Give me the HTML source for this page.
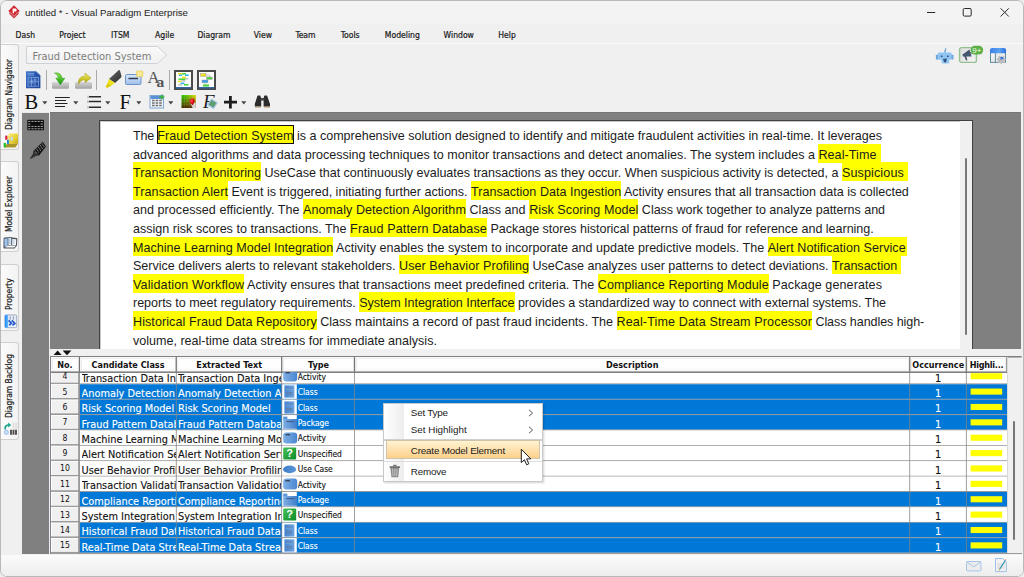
<!DOCTYPE html>
<html lang="en"><head><meta charset="utf-8"><title>untitled * - Visual Paradigm Enterprise</title>
<style>
*{box-sizing:border-box;margin:0;padding:0}
html,body{width:1024px;height:577px;overflow:hidden;background:#ececec}
body{position:relative;font-family:'Liberation Sans',sans-serif;color:#111}
.abs,#win div,#win span.p,#win svg{position:absolute}
#win{position:absolute;left:0;top:0;width:1024px;height:577px;background:#f0f0f0;border:1px solid #b9b9b9;border-radius:7px;overflow:hidden}
#in{left:-1px;top:-1px;width:1024px;height:577px}
.t{white-space:nowrap;line-height:1}
.menu{font:8.55px 'DejaVu Sans Condensed','Liberation Sans',sans-serif;color:#1a1a1a;-webkit-text-stroke:.2px #1a1a1a;top:30px;height:10px;line-height:10px;white-space:nowrap}
.vt{font:8.3px 'DejaVu Sans Condensed','Liberation Sans',sans-serif;color:#1a1a1a;-webkit-text-stroke:.2px #1a1a1a;white-space:nowrap;transform-origin:0 0;transform:rotate(-90deg);height:10px;line-height:10px}
.tab{left:1px;width:18px;border:1px solid #cfcfcf;border-left:none;border-radius:0 3px 3px 0;background:linear-gradient(90deg,#fbfbfb,#f3f3f3)}
.ln{left:133px;height:18px;font:12.55px/18px 'Liberation Sans',sans-serif;white-space:nowrap;color:#1c1c1c}
.ln span{padding:3.5px 0 1.9px 0}
.ln .h{background:#ffff00}
.ln .e{padding-right:4.3px}
.ln .f{padding-right:1.2px}
.ln .s{box-shadow:inset 0 0 0 1px #111}
.hd{top:357.5px;height:14px;border:1px solid #ededed;border-radius:1.5px;background:linear-gradient(#fefefe 70%,#f6f6f6);font:bold 9px 'DejaVu Sans Condensed','Liberation Sans',sans-serif;text-align:center;line-height:13px;color:#111;white-space:nowrap;overflow:hidden}
.row{left:80px;width:927px;background:#fff}
.row.sel{background:#0078d7;color:#fff}
.rn{left:51px;width:28px;border:1px solid #fdfdfd;border-bottom-color:#8c8c8c;border-right-color:#9a9a9a;background:#f0f0f0;font:8.6px 'DejaVu Sans Condensed','Liberation Sans',sans-serif;text-align:center;color:#111}
.c{height:15px;overflow:hidden;white-space:nowrap;font:10.88px/15px 'DejaVu Sans Condensed','Liberation Sans',sans-serif;-webkit-text-stroke:.12px}
.rnt{left:0;width:28px;height:15px;text-align:center;font:8.6px/15px 'DejaVu Sans Condensed','Liberation Sans',sans-serif;color:#111}
.ty{font:8.42px/15px 'DejaVu Sans Condensed','Liberation Sans',sans-serif}
.gl{background:#8a8a8a}
.mi{left:27px;font:9.85px 'Liberation Sans',sans-serif;color:#1a1a1a;white-space:nowrap;height:12px;line-height:12px}
</style></head>
<body><div id="win"><div id="in">
<div style="left:0;top:0;width:1024px;height:24px;background:#f3f3f3"></div>
<div style="left:0;top:24px;width:1024px;height:19px;background:#f0f0f0"></div>
<div style="left:0;top:43px;width:1024px;height:1px;background:#fbfbfb"></div>
<svg style="left:8px;top:5px" width="12" height="14" viewBox="0 0 12 14">
<path d="M6 0.3 L11.7 6 L6 11.7 L0.3 6 Z" fill="#d0272e"/>
<path d="M1 8.4 L6 13.6 L11 8.4 L10.2 7.6 L6 11.8 L1.8 7.6Z" fill="#c4252c" opacity=".9"/><path d="M2.2 7.2 L6 11 L9.8 7.2" stroke="#f3f3f3" stroke-width=".5" fill="none" opacity=".7"/>
<path d="M4.6 3.6 h2.6 a1.5 1.5 0 0 1 0 3 h-1.2 v1.6 h-1.4z" fill="#fff"/>
</svg>
<div class="t" style="left:25px;top:7px;font:9.66px 'Liberation Sans',sans-serif;height:12px;line-height:12px;color:#1b1b1b">untitled * - Visual Paradigm Enterprise</div>
<svg style="left:920px;top:4px" width="100" height="18" viewBox="0 0 100 18" fill="none" stroke="#2a2a2a" stroke-width="1">
<path d="M7 8.5 H15.2"/>
<rect x="43.2" y="4.5" width="8" height="7.6" rx="1.2"/>
<path d="M80.6 4.3 L88.8 12.5 M88.8 4.3 L80.6 12.5"/>
</svg>
<div class="menu" style="left:15.6px">Dash</div>
<div class="menu" style="left:59.3px">Project</div>
<div class="menu" style="left:111px">ITSM</div>
<div class="menu" style="left:155px">Agile</div>
<div class="menu" style="left:197.4px">Diagram</div>
<div class="menu" style="left:253.8px">View</div>
<div class="menu" style="left:295.4px">Team</div>
<div class="menu" style="left:340.8px">Tools</div>
<div class="menu" style="left:384.8px">Modeling</div>
<div class="menu" style="left:443.6px">Window</div>
<div class="menu" style="left:498.3px">Help</div>
<svg style="left:25px;top:45px" width="145" height="20" viewBox="0 0 145 20">
<defs><linearGradient id="bcg" x1="0" y1="0" x2="0" y2="1"><stop offset="0" stop-color="#fafafa"/><stop offset="1" stop-color="#f1f1f1"/></linearGradient></defs>
<path d="M1.5 1.5 H132.5 L141.5 10 L132.5 18.5 H1.5 Z" fill="url(#bcg)" stroke="#cdd1d8" stroke-width="1"/></svg>
<div class="t" style="left:32.5px;top:49.6px;font:11px 'DejaVu Sans Condensed','Liberation Sans',sans-serif;height:14px;line-height:14px;color:#7d7d7d">Fraud Detection System</div>
<svg style="left:935px;top:47px" width="20" height="18" viewBox="0 0 20 18">
<path d="M9.2 5.8 L9.6 3 L10.6 1.1 L11.4 1.3 L11 3.4 L10.9 5.8Z" fill="#6aa6dc"/>
<rect x="2.8" y="5.4" width="13.8" height="7.4" rx="1.3" fill="#8ec5f2"/>
<rect x=".9" y="7.8" width="2.2" height="4.8" rx=".5" fill="#6fa8dc"/>
<rect x="16.3" y="7.8" width="2.2" height="4.8" rx=".5" fill="#6fa8dc"/>
<path d="M6.6 12.4 H14.2 V15.2 Q14.2 16.6 12.8 16.6 H8 Q6.6 16.6 6.6 15.2Z" fill="#8ec5f2"/>
<rect x="5.8" y="8.4" width="1.7" height="1.7" rx=".5" fill="#2f4f78"/><rect x="12" y="8.4" width="1.7" height="1.7" rx=".5" fill="#2f4f78"/>
<path d="M7.8 11.9 L11.9 11.6 L11 15.4 L9.4 15.2Z" fill="#34527c"/>
</svg>
<svg style="left:958px;top:45px" width="27" height="20" viewBox="0 0 27 20">
<defs><linearGradient id="mg" x1="0" y1="0" x2="1" y2="1"><stop offset="0" stop-color="#dcdcdc"/><stop offset="1" stop-color="#f6f6f6"/></linearGradient></defs>
<rect x="1.6" y="2.6" width="16.8" height="14.8" rx="2" fill="url(#mg)" stroke="#93c190" stroke-width="1.4"/>
<path d="M4.4 9.6 L6 8.4 L11.4 4.6 L13.6 11.6 L8.4 11.4 L9.4 15.2 L8 15.6 L6.4 11.6 L5 11.6Z" fill="#46566f"/><path d="M12 7.4 q1.6 .2 1.2 2" stroke="#46566f" stroke-width=".8" fill="none"/>
<rect x="12.6" y="0.8" width="12.6" height="8.6" rx="4.3" fill="#5caf45"/>
<text x="18.9" y="7.6" font-family="Liberation Sans,sans-serif" font-size="8" fill="#f4ffe8" text-anchor="middle">9+</text>
</svg>
<svg style="left:989px;top:47px" width="19" height="19" viewBox="0 0 19 19">
<defs><linearGradient id="wg" x1="0" y1="0" x2="1" y2="0"><stop offset="0" stop-color="#3f7fe8"/><stop offset=".6" stop-color="#5aa2f2"/><stop offset="1" stop-color="#2f6fe0"/></linearGradient>
<linearGradient id="wp" x1="0" y1="0" x2="0" y2="1"><stop offset="0" stop-color="#ffffff"/><stop offset="1" stop-color="#e6e6e6"/></linearGradient></defs>
<rect x="1.5" y="3" width="15" height="12.3" fill="url(#wp)" stroke="#3a7088" stroke-width=".8"/>
<rect x="7" y="6" width="9" height="8.8" fill="#e9e9e9"/>
<path d="M1 3.2 Q1 1 3.2 1 H14.8 Q17 1 17 3.2 V6.2 H1Z" fill="url(#wg)"/>
<path d="M6.4 6.2 V15.3" stroke="#3a7088" stroke-width=".8"/>
<path d="M12.6 9.4 l1 .3 l.9 -.8 l.9 .7 l-.4 1.1 l.7 .9 l1.1 .1 l.1 1.2 l-1.1 .4 l-.3 1.1 l.6 1 l-.9 .8 l-1 -.6 l-1 .5 l-.3 1.1 h-1.2 l-.3 -1.1 l-1.1 -.5 l-1 .6 l-.8 -.9 l.6 -1 l-.4 -1 l-1.1 -.4 l.1 -1.2 l1.2 -.2 l.6 -.9 l-.4 -1.1 l1 -.7 l.9 .8z" fill="#bdbdbd"/>
<path d="M11.4 10 q2.6 -.8 3.4 1.6 l-1.4 .4 l-2.4 1 q1.2 -1.2 .4 -3z" fill="#2f70e2"/>
</svg>
<svg style="left:25px;top:70px" width="17" height="19" viewBox="0 0 17 19">
<defs><linearGradient id="dg" x1="0" y1="0" x2="1" y2="1"><stop offset="0" stop-color="#3f74cc"/><stop offset="1" stop-color="#1b4294"/></linearGradient></defs>
<path d="M1 1.2 H10.6 L15.4 5.6 V18.2 H1Z" fill="url(#dg)"/>
<path d="M10.6 1.2 V5.6 H15.4Z" fill="#2451a6"/><path d="M10.6 1.2 L15.4 5.6" stroke="#6f98dc" stroke-width=".7"/>
<path d="M2.4 3.4 H9 M2.4 5 H9" stroke="#86a9e4" stroke-width=".9" opacity=".85"/>
<rect x="3" y="7.6" width="10.6" height="8.6" fill="none" stroke="#8fb0e8" stroke-width=".8" opacity=".8"/>
<path d="M3 11.8 H13.6 M6.5 7.6 V16.2 M10 7.6 V16.2 M4.6 9.4 l4.4 4.6 m-4.4 0 l4.4 -4.6 M9 10 h3" stroke="#a4c0f0" stroke-width=".7" fill="none" opacity=".8"/>
</svg>
<div style="left:46px;top:70px;width:1px;height:20px;background:#a9a9a9"></div>
<svg style="left:51px;top:71px" width="19" height="19" viewBox="0 0 19 19">
<defs><linearGradient id="tr" x1="0" y1="0" x2="0" y2="1"><stop offset="0" stop-color="#d6d6d6"/><stop offset="1" stop-color="#a2a2a2"/></linearGradient>
<linearGradient id="ga" x1="0" y1="0" x2="0" y2="1"><stop offset="0" stop-color="#8fe04e"/><stop offset=".5" stop-color="#4cc028"/><stop offset="1" stop-color="#1c8f12"/></linearGradient></defs>
<rect x="1" y="11" width="17" height="6.8" rx="1.2" fill="url(#tr)"/>
<path d="M3.4 2 q6.6 -1 7.6 5.2 h2.8 l-4.4 6.6 l-4.6 -6.6 h2.6 q-.2 -3.6 -4 -5.2z" fill="url(#ga)" stroke="#2b9a22" stroke-width=".5"/>
</svg>
<svg style="left:74px;top:71px" width="19" height="19" viewBox="0 0 19 19">
<defs><linearGradient id="ya" x1="0" y1="0" x2="0" y2="1"><stop offset="0" stop-color="#ecea78"/><stop offset=".5" stop-color="#cfc82a"/><stop offset="1" stop-color="#9c940e"/></linearGradient></defs>
<rect x="1" y="11" width="17" height="6.8" rx="1.2" fill="url(#tr)"/>
<path d="M4.4 13.4 q-1 -7.8 6.6 -8.4 v-3 l6 5 l-6 4.8 v-3 q-4.6 .2 -6.6 4.6z" fill="url(#ya)" stroke="#a8a01a" stroke-width=".5"/>
</svg>
<div style="left:96px;top:70px;width:1px;height:20px;background:#a9a9a9"></div>
<svg style="left:104px;top:69px" width="19" height="20" viewBox="0 0 19 20">
<defs><linearGradient id="hb" x1="0" y1="0" x2="1" y2="1"><stop offset="0" stop-color="#6e6e6e"/><stop offset=".5" stop-color="#4a4a4a"/><stop offset="1" stop-color="#2c2c2c"/></linearGradient></defs>
<path d="M14.6 1.2 Q15.6 .6 16 1.8 L17.4 6.8 Q17.6 7.8 17 8.4 L11 13.9 L5 10Z" fill="url(#hb)"/>
<path d="M5 10 L11 13.9 L7.6 16.2 L3.6 18.8 L1.7 17.9 L3.3 14.4Z" fill="#efe11e"/>
<path d="M3.3 14.4 L7.6 16.2 L3.6 18.8 L1.7 17.9Z" fill="#d9cb14"/>
</svg>
<svg style="left:124px;top:70px" width="21" height="17" viewBox="0 0 21 17">
<defs><linearGradient id="tb" x1="0" y1="0" x2="0" y2="1"><stop offset="0" stop-color="#dbe8f8"/><stop offset="1" stop-color="#9dbfe8"/></linearGradient></defs>
<rect x="1.5" y="4.5" width="15.5" height="10" rx="1.2" fill="url(#tb)" stroke="#6d97cc" stroke-width="1"/>
<path d="M4.5 8.5 H14" stroke="#2b3a55" stroke-width="1.4"/>
<rect x="12.4" y="1" width="6.4" height="5.6" rx="1" fill="#f7e27a" stroke="#e6c84a" stroke-width=".6"/>
<path d="M14.4 1.6 V6 M16.6 1.6 V6" stroke="#fff8c8" stroke-width=".8"/>
</svg>
<div class="t" style="left:147.6px;top:67.6px;font:16.8px 'Liberation Serif',serif;color:#555;height:20px;line-height:20px">A</div>
<div class="t" style="left:156.4px;top:72.6px;font:bold 15.5px 'Liberation Serif',serif;color:#555;height:18px;line-height:18px">a</div>
<div style="left:169px;top:70px;width:1px;height:20px;background:#a9a9a9"></div>
<svg style="left:174px;top:70px" width="19" height="20" viewBox="0 0 19 20">
<rect x="1" y="1" width="17" height="18" fill="#fff" stroke="#4a4a4a" stroke-width="2"/>
<path d="M2 17.8 H17" stroke="#3465a4" stroke-width="1.4"/>
<rect x="4" y="3" width="4" height="1.6" fill="#f2e020"/><rect x="8" y="3" width="4" height="1.6" fill="#4cd63c"/><rect x="5" y="4.6" width="3" height="1.4" fill="#28b4ee"/><rect x="11" y="4.4" width="3.6" height="1.6" fill="#28b4ee"/>
<rect x="8" y="6.6" width="4" height="1.6" fill="#f2e020"/><rect x="4.5" y="8.4" width="7" height="1.6" fill="#4cd63c"/><rect x="11.5" y="8" width="3" height="1.4" fill="#bbb"/>
<rect x="4" y="10.6" width="3.4" height="1.6" fill="#f2e020"/><rect x="7.4" y="10.2" width="4" height="1.4" fill="#bbb"/>
<rect x="6.5" y="12.6" width="4" height="1.6" fill="#28b4ee"/><rect x="10" y="14" width="4.4" height="1.6" fill="#4cd63c"/><rect x="4" y="14.4" width="4" height="1.2" fill="#bbb"/>
</svg>
<svg style="left:197px;top:70px" width="19" height="20" viewBox="0 0 19 20">
<rect x="1" y="1" width="17" height="18" fill="#fff" stroke="#4a4a4a" stroke-width="2"/>
<path d="M2 17.8 H17" stroke="#3465a4" stroke-width="1.4"/>
<rect x="3.6" y="3.6" width="5.4" height="2.8" fill="#f2e020" stroke="#999" stroke-width=".5"/>
<rect x="9.6" y="7" width="5.6" height="2.4" fill="#4cd63c" stroke="#999" stroke-width=".5"/>
<rect x="5" y="10" width="6" height="2.8" fill="#3aa0ee" stroke="#999" stroke-width=".5"/>
<rect x="6" y="14.4" width="6" height="2.2" fill="#4cd63c"/>
<path d="M9 5 H12.4 V7 M8 12.8 V14.4" stroke="#999" stroke-width=".6" fill="none"/>
</svg>
<div class="t" style="left:24.5px;top:90.5px;font:20.5px 'Liberation Serif',serif;color:#111;height:22px;line-height:22px">B</div>
<svg style="left:41.5px;top:101.0px" width="6" height="4" viewBox="0 0 6 4"><path d="M0.3 0.2 H5.3 L2.8 3.6Z" fill="#444"/></svg>
<svg style="left:54px;top:95px" width="18" height="14" viewBox="0 0 18 14"><path d="M1 2.5 H15.8 M1 5.5 H12 M1 8.5 H13.5 M1 11.5 H11" stroke="#222" stroke-width="1.1"/></svg>
<svg style="left:73px;top:101.0px" width="6" height="4" viewBox="0 0 6 4"><path d="M0.3 0.2 H5.3 L2.8 3.6Z" fill="#444"/></svg>
<svg style="left:86px;top:95px" width="18" height="14" viewBox="0 0 18 14"><path d="M3 1.85 H15 M3 6.6 H15 M3 12.25 H15" stroke="#2c2c2c" stroke-width="1.5"/><path d="M2 .6 V3.2 M1.4 5.4 l1 .5 l-1 1.6 h1.2 M2 10.8 V13.6" stroke="#8a8a8a" stroke-width=".7" fill="none"/></svg>
<svg style="left:104.6px;top:101.0px" width="6" height="4" viewBox="0 0 6 4"><path d="M0.3 0.2 H5.3 L2.8 3.6Z" fill="#444"/></svg>
<div class="t" style="left:119.5px;top:90.5px;font:20.5px 'Liberation Serif',serif;color:#111;height:22px;line-height:22px">F</div>
<svg style="left:135.6px;top:101.0px" width="6" height="4" viewBox="0 0 6 4"><path d="M0.3 0.2 H5.3 L2.8 3.6Z" fill="#444"/></svg>
<svg style="left:149px;top:94px" width="17" height="16" viewBox="0 0 17 16">
<rect x="1" y="1.5" width="13.5" height="12.5" fill="#f4f8fc" stroke="#7fa6cf" stroke-width="1"/>
<rect x="1.5" y="2" width="12.5" height="3" fill="#5b8fd6"/>
<path d="M3 6.6 H5.6 M6.6 6.6 H9.2 M10.2 6.6 H12.8 M3 9 H5.6 M6.6 9 H9.2 M10.2 9 H12.8 M3 11.4 H5.6 M6.6 11.4 H9.2 M10.2 11.4 H12.8" stroke="#6b6b6b" stroke-width="1.5"/>
<path d="M10.2 3 H15.4 M12.8 0.6 V5.6" stroke="#3cb43c" stroke-width="1.5"/>
</svg>
<svg style="left:168px;top:101.0px" width="6" height="4" viewBox="0 0 6 4"><path d="M0.3 0.2 H5.3 L2.8 3.6Z" fill="#444"/></svg>
<svg style="left:181px;top:94px" width="16" height="15" viewBox="0 0 16 15">
<defs><linearGradient id="cg" x1="0" y1="0" x2="1" y2="0"><stop offset="0" stop-color="#1fc808"/><stop offset=".55" stop-color="#7fd000"/><stop offset="1" stop-color="#e6e010"/></linearGradient>
<linearGradient id="cg2" x1="0" y1="0" x2="0" y2="1"><stop offset="0" stop-color="#5a1a00" stop-opacity="0"/><stop offset=".55" stop-color="#5a2a00" stop-opacity=".55"/><stop offset="1" stop-color="#4a1400" stop-opacity=".92"/></linearGradient>
<radialGradient id="rb" cx=".4" cy=".35" r=".7"><stop offset="0" stop-color="#ff5a5a"/><stop offset=".6" stop-color="#e00010"/><stop offset="1" stop-color="#900008"/></radialGradient></defs>
<rect x=".6" y="1" width="14.2" height="13" fill="url(#cg)"/>
<rect x=".6" y="1" width="14.2" height="13" fill="url(#cg2)"/>
<path d="M3.4 1 V14 M6.2 1 V14 M9 1 V14 M11.8 1 V14 M.6 4.2 H14.8 M.6 7.4 H14.8 M.6 10.6 H14.8" stroke="#fff" stroke-opacity=".16" stroke-width=".6"/>
<path d="M9.6 9.6 L11.6 14 H14.8 V8.6Z" fill="#d4d4d4"/>
<path d="M8.6 7.2 a2.5 2.5 0 1 1 4.9 .4 q-.6 2.2 -2 3.6 q-2.4 -1.6 -2.9 -4z" fill="url(#rb)"/>
</svg>
<div class="t" style="left:203px;top:92px;font:italic 19px 'Liberation Serif',serif;color:#222;height:20px;line-height:20px">F</div>
<svg style="left:207px;top:98px" width="12" height="12" viewBox="0 0 12 12"><path d="M4.4 1.2 L10.2 4.8 L6.6 10.4 L0.8 6.8Z" fill="#5e9c72" stroke="#a9c8ea" stroke-width="1.2"/></svg>
<svg style="left:223px;top:95px" width="15" height="14" viewBox="0 0 15 14"><path d="M1 7.2 H14 M7.4 1 V13.4" stroke="#1e1e1e" stroke-width="2.8"/></svg>
<svg style="left:241px;top:101.0px" width="6" height="4" viewBox="0 0 6 4"><path d="M0.3 0.2 H5.3 L2.8 3.6Z" fill="#444"/></svg>
<svg style="left:254px;top:95px" width="17" height="13" viewBox="0 0 17 13">
<path d="M3.2 1.6 q0 -1 1 -1 h1.4 q1 0 1 1 l.6 2 v8 h-6.4 v-2.6z M10 1.6 q0 -1 1 -1 h1.4 q1 0 1 1 l2.6 7.4 v2.6 h-6.4 v-8z" fill="#2b2b2b"/>
<rect x="6.6" y="3" width="3.8" height="2.6" fill="#444"/>
<path d="M1 12.2 H6.8 M10.2 12.2 H16" stroke="#b88a5a" stroke-width=".8"/>
</svg>
<div class="tab" style="top:44px;height:106px"></div>
<div class="vt" style="left:3.6px;top:129.8px">Diagram Navigator</div>
<div class="tab" style="top:161px;height:91px"></div>
<div class="vt" style="left:3.6px;top:232.4px">Model Explorer</div>
<div class="tab" style="top:264px;height:67px"></div>
<div class="vt" style="left:3.6px;top:310.4px">Property</div>
<div class="tab" style="top:342px;height:98px"></div>
<div class="vt" style="left:3.6px;top:418.4px">Diagram Backlog</div>
<svg style="left:3px;top:133px" width="16" height="16" viewBox="0 0 16 16">
<defs><linearGradient id="yb" x1="0" y1="0" x2="1" y2="1"><stop offset="0" stop-color="#f7ec7a"/><stop offset=".6" stop-color="#e6cf2e"/><stop offset="1" stop-color="#bfa51c"/></linearGradient></defs>
<path d="M0.8 14.6 L4.4 10.6 H15 L12.4 14.6Z" fill="#a8952a"/>
<rect x="5.6" y=".4" width="9.4" height="10.4" rx=".8" fill="url(#yb)"/>
<rect x="7.7" y="3.9" width="2.1" height="3.9" fill="#a9c4ee"/><rect x="8.2" y="4.6" width="1.1" height="2.2" fill="#eef4ff"/>
<rect x="2.2" y="2.6" width="2.1" height="4.2" fill="#d81f4a"/><rect x="4.3" y="3.2" width="1" height="3" fill="#f0a020"/>
<rect x="4" y="6.8" width="1.9" height="4.4" fill="#1f86d8"/>
<rect x=".6" y="9.9" width="2.4" height="4.5" fill="#2fc22f"/>
</svg>
<svg style="left:2px;top:236px" width="17" height="14" viewBox="0 0 17 14">
<path d="M1.6 2.6 Q1.4 1.6 2.6 1.5 L9 1 Q10 .9 10.2 1.6 L14.6 1.9 Q15.4 2 15.3 2.9 L15 9.6 L12.6 12.4 L2.2 12.6 Q1.4 12.6 1.4 11.6Z" fill="#4d535c"/>
<path d="M2.3 2.8 L5.6 2.2 V9.6 L2.6 11.2Z" fill="#9cc4ee"/>
<path d="M6.4 2 L9.2 1.8 V9 H6.4Z" fill="#e8f0fa"/><path d="M7.2 2.6 h1.2 v5.6 h-1.2z" fill="#a9c9ee"/>
<path d="M10.2 3 L14.2 3.2 L14 9 H10.2Z" fill="#f4f6f8"/><path d="M10.8 3.8 h1.6 v4.2 h-1.6z" fill="#c4d8f0"/>
<path d="M5.8 9.6 H14 L12.2 11.6 H3Z" fill="#fafafa"/>
</svg>
<svg style="left:4px;top:314px" width="14" height="15" viewBox="0 0 14 15">
<defs><linearGradient id="pb" x1="0" y1="0" x2="1" y2="0"><stop offset="0" stop-color="#1a8cff"/><stop offset="1" stop-color="#6ab8ff"/></linearGradient></defs>
<rect x=".9" y=".9" width="11.8" height="12.8" rx="1.2" fill="#e4ebf6" stroke="#8e9bb4" stroke-width=".8"/>
<path d="M2.1 .9 H4.1 V13.7 H2.1 Q.9 13.7 .9 12.5 V2.1 Q.9 .9 2.1 .9Z" fill="url(#pb)"/>
<path d="M6.2 2.4 V5.6 M9.4 2.4 V5.6" stroke="#8a93a8" stroke-width="1"/>
<path d="M4.6 6.4 L7.4 9.2 L5.2 11.4 M7.8 6.4 L10.8 9.4 L8.4 11.6" fill="none" stroke="#2458c8" stroke-width="1.7"/>
<path d="M4.4 12.2 H12" stroke="#fff" stroke-width=".8"/>
</svg>
<svg style="left:3px;top:422px" width="16" height="15" viewBox="0 0 16 15">
<path d="M1.4 7.4 Q.6 2.4 5.2 2.2 V.6 L8.2 3 L5.2 5.4 V3.9 Q2.6 4 3 7.4Z" fill="#19a68a"/>
<circle cx="3.3" cy="10.2" r="2.5" fill="#a6c6f0"/><circle cx="3.3" cy="10.2" r="1.2" fill="#d4e4f8"/>
<path d="M8 7.8 V12.8 M10.5 7.8 V12.8 M13 7.8 V12.8" stroke="#4c4c4c" stroke-width="1.9"/>
<path d="M10.2 .6 V7 M12 .6 V7 M13.8 .6 V7" stroke="#d6d6d6" stroke-width=".9"/>
</svg>
<div style="left:22px;top:112px;width:999px;height:237px;background:#808080"></div>
<div style="left:22px;top:349px;width:28px;height:205px;background:#808080"></div>
<div style="left:50px;top:112px;width:971px;height:1px;background:#777"></div>
<div style="left:22px;top:112px;width:28px;height:1px;background:#e8e8e8"></div>
<div style="left:49px;top:112px;width:1px;height:442px;background:#ededed"></div>
<svg style="left:27px;top:119px" width="18" height="12" viewBox="0 0 18 12">
<rect x=".3" y=".7" width="16.6" height="10.6" rx=".9" fill="#0c0c0c"/><rect x="1.2" y="1.9" width="2.1" height="1.1" fill="#9a9a9a"/><rect x="4.4" y="1.9" width="2.1" height="1.1" fill="#9a9a9a"/><rect x="7.5" y="1.9" width="2.1" height="1.1" fill="#9a9a9a"/><rect x="10.6" y="1.9" width="2.1" height="1.1" fill="#9a9a9a"/><rect x="13.7" y="1.9" width="2.1" height="1.1" fill="#9a9a9a"/><rect x="1.2" y="4.5" width="2.1" height="1.1" fill="#9a9a9a"/><rect x="13.7" y="4.5" width="2.1" height="1.1" fill="#9a9a9a"/><rect x="1.2" y="6.9" width="2.1" height="1.1" fill="#9a9a9a"/><rect x="4.4" y="6.9" width="2.1" height="1.1" fill="#9a9a9a"/><rect x="7.5" y="6.9" width="2.1" height="1.1" fill="#9a9a9a"/><rect x="10.6" y="6.9" width="2.1" height="1.1" fill="#9a9a9a"/><rect x="13.7" y="6.9" width="2.1" height="1.1" fill="#9a9a9a"/><rect x="1.2" y="9.2" width="2.1" height="1.1" fill="#9a9a9a"/><rect x="4.4" y="9.2" width="2.1" height="1.1" fill="#9a9a9a"/><rect x="7.5" y="9.2" width="2.1" height="1.1" fill="#9a9a9a"/><rect x="10.6" y="9.2" width="2.1" height="1.1" fill="#9a9a9a"/><rect x="13.7" y="9.2" width="2.1" height="1.1" fill="#9a9a9a"/>
</svg>
<svg style="left:29px;top:140px" width="18" height="20" viewBox="0 0 18 20">
<path d="M13.7 1.7 L17 6.5 L10.1 15.6 L4.1 11.2Z" fill="#141414"/><circle cx="13.19" cy="3.94" r=".62" fill="#8d8d8d"/><circle cx="14.12" cy="5.32" r=".62" fill="#8d8d8d"/><circle cx="15.05" cy="6.70" r=".62" fill="#8d8d8d"/><circle cx="11.41" cy="5.70" r=".62" fill="#8d8d8d"/><circle cx="12.34" cy="7.08" r=".62" fill="#8d8d8d"/><circle cx="13.27" cy="8.46" r=".62" fill="#8d8d8d"/><circle cx="9.62" cy="7.47" r=".62" fill="#8d8d8d"/><circle cx="10.55" cy="8.85" r=".62" fill="#8d8d8d"/><circle cx="11.48" cy="10.23" r=".62" fill="#8d8d8d"/><circle cx="7.83" cy="9.24" r=".62" fill="#8d8d8d"/><circle cx="8.76" cy="10.62" r=".62" fill="#8d8d8d"/><circle cx="9.69" cy="12.00" r=".62" fill="#8d8d8d"/><circle cx="6.05" cy="11.00" r=".62" fill="#8d8d8d"/><circle cx="6.98" cy="12.38" r=".62" fill="#8d8d8d"/><circle cx="7.91" cy="13.76" r=".62" fill="#8d8d8d"/>
<path d="M4.1 11.2 L10.1 15.6 L6.8 15.9 L1.6 18.9 L1.1 18.3 L4.0 13.8Z" fill="#303030"/>
</svg>
<div style="left:99px;top:120px;width:874px;height:229px;background:#fff;border:1px solid #404040;border-bottom:none;box-shadow:inset 1px 1px 0 rgba(64,64,64,.28)"></div>
<div style="left:960px;top:121px;width:12px;height:228px;background:#f0f0f0"></div>
<div style="left:965px;top:158px;width:2px;height:177px;background:#7a7a7a;border-radius:1px"></div>
<div class="ln" id="l0" style="top:126.4px"><span id="s0_0" class="" style="letter-spacing:-0.2148px">The </span><span id="s0_1" class="h s" style="letter-spacing:0.0753px">Fraud Detection System</span><span id="s0_2" class="" style="letter-spacing:-0.0138px"> is a comprehensive solution designed to identify and mitigate fraudulent activities in real-time. It leverages</span></div>
<div class="ln" id="l1" style="top:145.0px"><span id="s1_0" class="" style="letter-spacing:0.0061px">advanced algorithms and data processing techniques to monitor transactions and detect anomalies. The system includes a </span><span id="s1_1" class="h e" style="letter-spacing:0.0882px">Real-Time</span></div>
<div class="ln" id="l2" style="top:163.6px"><span id="s2_0" class="h" style="letter-spacing:0.0384px">Transaction Monitoring</span><span id="s2_1" class="" style="letter-spacing:-0.027px"> UseCase that continuously evaluates transactions as they occur. When suspicious activity is detected, a </span><span id="s2_2" class="h e" style="letter-spacing:0.1313px">Suspicious</span></div>
<div class="ln" id="l3" style="top:182.2px"><span id="s3_0" class="h" style="letter-spacing:0.0772px">Transaction Alert</span><span id="s3_1" class="" style="letter-spacing:-0.023px"> Event is triggered, initiating further actions. </span><span id="s3_2" class="h" style="letter-spacing:0.0294px">Transaction Data Ingestion</span><span id="s3_3" class="" style="letter-spacing:-0.0328px"> Activity ensures that all transaction data is collected</span></div>
<div class="ln" id="l4" style="top:200.8px"><span id="s4_0" class="" style="letter-spacing:0.0416px">and processed efficiently. The </span><span id="s4_1" class="h" style="letter-spacing:0.0645px">Anomaly Detection Algorithm</span><span id="s4_2" class="" style="letter-spacing:0.044px"> Class and </span><span id="s4_3" class="h" style="letter-spacing:0.0642px">Risk Scoring Model</span><span id="s4_4" class="" style="letter-spacing:-0.0374px"> Class work together to analyze patterns and</span></div>
<div class="ln" id="l5" style="top:219.4px"><span id="s5_0" class="" style="letter-spacing:0.0111px">assign risk scores to transactions. The </span><span id="s5_1" class="h" style="letter-spacing:0.1354px">Fraud Pattern Database</span><span id="s5_2" class="" style="letter-spacing:-0.0241px"> Package stores historical patterns of fraud for reference and learning.</span></div>
<div class="ln" id="l6" style="top:238.0px"><span id="s6_0" class="h" style="letter-spacing:0.0033px">Machine Learning Model Integration</span><span id="s6_1" class="" style="letter-spacing:0.0104px"> Activity enables the system to incorporate and update predictive models. The </span><span id="s6_2" class="h f" style="letter-spacing:0.0505px">Alert Notification Service</span></div>
<div class="ln" id="l7" style="top:256.6px"><span id="s7_0" class="" style="letter-spacing:-0.0081px">Service delivers alerts to relevant stakeholders. </span><span id="s7_1" class="h" style="letter-spacing:0.0734px">User Behavior Profiling</span><span id="s7_2" class="" style="letter-spacing:-0.0066px"> UseCase analyzes user patterns to detect deviations. </span><span id="s7_3" class="h e" style="letter-spacing:0.0006px">Transaction</span></div>
<div class="ln" id="l8" style="top:275.2px"><span id="s8_0" class="h" style="letter-spacing:0.1168px">Validation Workflow</span><span id="s8_1" class="" style="letter-spacing:0.0021px"> Activity ensures that transactions meet predefined criteria. The </span><span id="s8_2" class="h" style="letter-spacing:0.0822px">Compliance Reporting Module</span><span id="s8_3" class="" style="letter-spacing:0.0911px"> Package generates</span></div>
<div class="ln" id="l9" style="top:293.8px"><span id="s9_0" class="" style="letter-spacing:-0.0279px">reports to meet regulatory requirements. </span><span id="s9_1" class="h" style="letter-spacing:-0.0579px">System Integration Interface</span><span id="s9_2" class="" style="letter-spacing:-0.0632px"> provides a standardized way to connect with external systems. The</span></div>
<div class="ln" id="l10" style="top:312.4px"><span id="s10_0" class="h" style="letter-spacing:0.0762px">Historical Fraud Data Repository</span><span id="s10_1" class="" style="letter-spacing:0.0017px"> Class maintains a record of past fraud incidents. The </span><span id="s10_2" class="h" style="letter-spacing:0.1361px">Real-Time Data Stream Processor</span><span id="s10_3" class="" style="letter-spacing:-0.0744px"> Class handles high-</span></div>
<div class="ln" id="l11" style="top:331.0px"><span id="s11_0" class="" style="letter-spacing:-0.0024px">volume, real-time data streams for immediate analysis.</span></div>
<div style="left:50px;top:349px;width:972px;height:8px;background:#f0f0f0"></div>
<svg style="left:53px;top:350px" width="20" height="6" viewBox="0 0 20 6"><path d="M0.6 5 L4.6 0.6 L8.6 5Z M9.6 0.6 H18.4 L14 5.2Z" fill="#111"/></svg>
<div style="left:50px;top:356px;width:972px;height:198px;background:#f0f0f0"></div>
<svg style="left:50px;top:355px" width="972" height="4" viewBox="50 355 972 4"><rect x="50" y="356.1" width="971.6" height="1.4" fill="#747474"/></svg>
<div style="left:50px;top:356px;width:1px;height:198px;background:#7f8590"></div>
<div style="left:51px;top:357px;width:956px;height:16px;background:#fafafa"></div>
<div class="hd" style="left:51.5px;width:27.0px">No.</div>
<div class="hd" style="left:80.5px;width:95.0px">Candidate Class</div>
<div class="hd" style="left:177px;width:104.5px">Extracted Text</div>
<div class="hd" style="left:283px;width:71px">Type</div>
<div class="hd" style="left:355.5px;width:553.5px">Description</div>
<div class="hd" style="left:910.5px;width:55.5px">Occurrence</div>
<div class="hd" style="left:967px;width:39px;letter-spacing:-0.25px">Highli...</div>
<svg style="left:51px;top:357px" width="956" height="197" viewBox="51 357 956 197"><defs><clipPath id="tc"><rect x="51" y="372.4" width="956" height="182"/></clipPath></defs><g clip-path="url(#tc)"><rect x="79.5" y="368.91" width="927.5" height="14.61" fill="#ffffff"/><rect x="282.1" y="368.91" width="14.7" height="14.61" fill="#fff"/><rect x="970.6" y="373.16" width="31.6" height="6.1" fill="#ffff00"/><rect x="51" y="368.91" width="28.5" height="14.61" fill="#f0f0f0"/><rect x="51" y="368.91" width="27.3" height="0.77" fill="#fff"/><rect x="51" y="368.91" width="0.77" height="13.84" fill="#fff"/><rect x="51" y="382.75" width="28" height="0.77" fill="#858585"/><rect x="78.3" y="368.91" width="0.77" height="14.61" fill="#858585"/><rect x="51" y="383.52" width="956" height="0.77" fill="#848484"/><rect x="79.5" y="384.29" width="927.5" height="14.61" fill="#0078d7"/><rect x="282.1" y="384.29" width="14.7" height="14.61" fill="#fff"/><rect x="970.6" y="388.54" width="31.6" height="6.1" fill="#ffff00"/><rect x="51" y="384.29" width="28.5" height="14.61" fill="#f0f0f0"/><rect x="51" y="384.29" width="27.3" height="0.77" fill="#fff"/><rect x="51" y="384.29" width="0.77" height="13.84" fill="#fff"/><rect x="51" y="398.13" width="28" height="0.77" fill="#858585"/><rect x="78.3" y="384.29" width="0.77" height="14.61" fill="#858585"/><rect x="51" y="398.90" width="956" height="0.77" fill="#848484"/><rect x="79.5" y="399.67" width="927.5" height="14.61" fill="#0078d7"/><rect x="282.1" y="399.67" width="14.7" height="14.61" fill="#fff"/><rect x="970.6" y="403.92" width="31.6" height="6.1" fill="#ffff00"/><rect x="51" y="399.67" width="28.5" height="14.61" fill="#f0f0f0"/><rect x="51" y="399.67" width="27.3" height="0.77" fill="#fff"/><rect x="51" y="399.67" width="0.77" height="13.84" fill="#fff"/><rect x="51" y="413.51" width="28" height="0.77" fill="#858585"/><rect x="78.3" y="399.67" width="0.77" height="14.61" fill="#858585"/><rect x="51" y="414.28" width="956" height="0.77" fill="#848484"/><rect x="79.5" y="415.05" width="927.5" height="14.61" fill="#0078d7"/><rect x="282.1" y="415.05" width="14.7" height="14.61" fill="#fff"/><rect x="970.6" y="419.30" width="31.6" height="6.1" fill="#ffff00"/><rect x="51" y="415.05" width="28.5" height="14.61" fill="#f0f0f0"/><rect x="51" y="415.05" width="27.3" height="0.77" fill="#fff"/><rect x="51" y="415.05" width="0.77" height="13.84" fill="#fff"/><rect x="51" y="428.89" width="28" height="0.77" fill="#858585"/><rect x="78.3" y="415.05" width="0.77" height="14.61" fill="#858585"/><rect x="51" y="429.66" width="956" height="0.77" fill="#848484"/><rect x="79.5" y="430.43" width="927.5" height="14.61" fill="#ffffff"/><rect x="282.1" y="430.43" width="14.7" height="14.61" fill="#fff"/><rect x="970.6" y="434.68" width="31.6" height="6.1" fill="#ffff00"/><rect x="51" y="430.43" width="28.5" height="14.61" fill="#f0f0f0"/><rect x="51" y="430.43" width="27.3" height="0.77" fill="#fff"/><rect x="51" y="430.43" width="0.77" height="13.84" fill="#fff"/><rect x="51" y="444.27" width="28" height="0.77" fill="#858585"/><rect x="78.3" y="430.43" width="0.77" height="14.61" fill="#858585"/><rect x="51" y="445.04" width="956" height="0.77" fill="#848484"/><rect x="79.5" y="445.81" width="927.5" height="14.61" fill="#ffffff"/><rect x="282.1" y="445.81" width="14.7" height="14.61" fill="#fff"/><rect x="970.6" y="450.06" width="31.6" height="6.1" fill="#ffff00"/><rect x="51" y="445.81" width="28.5" height="14.61" fill="#f0f0f0"/><rect x="51" y="445.81" width="27.3" height="0.77" fill="#fff"/><rect x="51" y="445.81" width="0.77" height="13.84" fill="#fff"/><rect x="51" y="459.65" width="28" height="0.77" fill="#858585"/><rect x="78.3" y="445.81" width="0.77" height="14.61" fill="#858585"/><rect x="51" y="460.42" width="956" height="0.77" fill="#848484"/><rect x="79.5" y="461.19" width="927.5" height="14.61" fill="#ffffff"/><rect x="282.1" y="461.19" width="14.7" height="14.61" fill="#fff"/><rect x="970.6" y="465.44" width="31.6" height="6.1" fill="#ffff00"/><rect x="51" y="461.19" width="28.5" height="14.61" fill="#f0f0f0"/><rect x="51" y="461.19" width="27.3" height="0.77" fill="#fff"/><rect x="51" y="461.19" width="0.77" height="13.84" fill="#fff"/><rect x="51" y="475.03" width="28" height="0.77" fill="#858585"/><rect x="78.3" y="461.19" width="0.77" height="14.61" fill="#858585"/><rect x="51" y="475.80" width="956" height="0.77" fill="#848484"/><rect x="79.5" y="476.57" width="927.5" height="14.61" fill="#ffffff"/><rect x="282.1" y="476.57" width="14.7" height="14.61" fill="#fff"/><rect x="970.6" y="480.82" width="31.6" height="6.1" fill="#ffff00"/><rect x="51" y="476.57" width="28.5" height="14.61" fill="#f0f0f0"/><rect x="51" y="476.57" width="27.3" height="0.77" fill="#fff"/><rect x="51" y="476.57" width="0.77" height="13.84" fill="#fff"/><rect x="51" y="490.41" width="28" height="0.77" fill="#858585"/><rect x="78.3" y="476.57" width="0.77" height="14.61" fill="#858585"/><rect x="51" y="491.18" width="956" height="0.77" fill="#848484"/><rect x="79.5" y="491.95" width="927.5" height="14.61" fill="#0078d7"/><rect x="282.1" y="491.95" width="14.7" height="14.61" fill="#fff"/><rect x="970.6" y="496.20" width="31.6" height="6.1" fill="#ffff00"/><rect x="51" y="491.95" width="28.5" height="14.61" fill="#f0f0f0"/><rect x="51" y="491.95" width="27.3" height="0.77" fill="#fff"/><rect x="51" y="491.95" width="0.77" height="13.84" fill="#fff"/><rect x="51" y="505.79" width="28" height="0.77" fill="#858585"/><rect x="78.3" y="491.95" width="0.77" height="14.61" fill="#858585"/><rect x="51" y="506.56" width="956" height="0.77" fill="#848484"/><rect x="79.5" y="507.33" width="927.5" height="14.61" fill="#ffffff"/><rect x="282.1" y="507.33" width="14.7" height="14.61" fill="#fff"/><rect x="970.6" y="511.58" width="31.6" height="6.1" fill="#ffff00"/><rect x="51" y="507.33" width="28.5" height="14.61" fill="#f0f0f0"/><rect x="51" y="507.33" width="27.3" height="0.77" fill="#fff"/><rect x="51" y="507.33" width="0.77" height="13.84" fill="#fff"/><rect x="51" y="521.17" width="28" height="0.77" fill="#858585"/><rect x="78.3" y="507.33" width="0.77" height="14.61" fill="#858585"/><rect x="51" y="521.94" width="956" height="0.77" fill="#848484"/><rect x="79.5" y="522.71" width="927.5" height="14.61" fill="#0078d7"/><rect x="282.1" y="522.71" width="14.7" height="14.61" fill="#fff"/><rect x="970.6" y="526.96" width="31.6" height="6.1" fill="#ffff00"/><rect x="51" y="522.71" width="28.5" height="14.61" fill="#f0f0f0"/><rect x="51" y="522.71" width="27.3" height="0.77" fill="#fff"/><rect x="51" y="522.71" width="0.77" height="13.84" fill="#fff"/><rect x="51" y="536.55" width="28" height="0.77" fill="#858585"/><rect x="78.3" y="522.71" width="0.77" height="14.61" fill="#858585"/><rect x="51" y="537.32" width="956" height="0.77" fill="#848484"/><rect x="79.5" y="538.09" width="927.5" height="14.61" fill="#0078d7"/><rect x="282.1" y="538.09" width="14.7" height="14.61" fill="#fff"/><rect x="970.6" y="542.34" width="31.6" height="6.1" fill="#ffff00"/><rect x="51" y="538.09" width="28.5" height="14.61" fill="#f0f0f0"/><rect x="51" y="538.09" width="27.3" height="0.77" fill="#fff"/><rect x="51" y="538.09" width="0.77" height="13.84" fill="#fff"/><rect x="51" y="551.93" width="28" height="0.77" fill="#858585"/><rect x="78.3" y="538.09" width="0.77" height="14.61" fill="#858585"/><rect x="51" y="552.70" width="956" height="0.77" fill="#848484"/></g><rect x="79.06" y="372" width="0.77" height="181.3" fill="#848484"/><rect x="78.85" y="357" width="1.2" height="15.5" fill="#727272"/><rect x="175.87" y="372" width="0.77" height="181.3" fill="#848484"/><rect x="175.65" y="357" width="1.2" height="15.5" fill="#727272"/><rect x="281.31" y="372" width="0.77" height="181.3" fill="#848484"/><rect x="281.10" y="357" width="1.2" height="15.5" fill="#727272"/><rect x="354.12" y="372" width="0.77" height="181.3" fill="#848484"/><rect x="353.90" y="357" width="1.2" height="15.5" fill="#727272"/><rect x="909.37" y="372" width="0.77" height="181.3" fill="#848484"/><rect x="909.15" y="357" width="1.2" height="15.5" fill="#727272"/><rect x="965.91" y="372" width="0.77" height="181.3" fill="#848484"/><rect x="965.70" y="357" width="1.2" height="15.5" fill="#727272"/><rect x="51" y="371.5" width="956" height="1.4" fill="#747474"/><rect x="1006.2" y="357" width="1" height="15.5" fill="#8a8a8a"/></svg>
<div style="left:51px;top:372.4px;width:956px;height:181px;overflow:hidden"><div style="left:-51px;top:-372.4px;width:1024px;height:577px">
<div style="left:51px;top:368.91px;width:956px;height:14.6px;color:#111"><div class="rnt" style="top:0.3px">4</div><div class="c" style="left:30.5px;width:94.3px;top:1.7px">Transaction Data Ingestion</div><div class="c" style="left:127px;width:103.4px;top:1.7px">Transaction Data Ingestion</div><svg style="left:231.5px;top:1.5px" width="15" height="12" viewBox="0 0 15 12"><defs><linearGradient id="ic4" x1="0" y1="0" x2="1" y2="0"><stop offset="0" stop-color="#7fb0e6"/><stop offset="1" stop-color="#4a86cf"/></linearGradient></defs><rect x=".2" y=".4" width="14" height="11" rx="3" fill="url(#ic4)"/><path d="M2.4 2.8 H7" stroke="#222" stroke-width="1"/></svg><div class="c ty" style="left:246.7px;width:57px;top:1px">Activity</div><div class="c" style="left:859px;width:56px;text-align:center;top:1.7px">1</div></div>
<div style="left:51px;top:384.29px;width:956px;height:14.6px;color:#fff"><div class="rnt" style="top:0.3px">5</div><div class="c" style="left:30.5px;width:94.3px;top:1.7px">Anomaly Detection Algorithm</div><div class="c" style="left:127px;width:103.4px;top:1.7px">Anomaly Detection Algorithm</div><svg style="left:233.0px;top:1px" width="11" height="13" viewBox="0 0 11 13"><defs><linearGradient id="ic5" x1="0" y1="0" x2="1" y2="0"><stop offset="0" stop-color="#4384d2"/><stop offset="1" stop-color="#6ea4e0"/></linearGradient></defs><rect x=".4" y=".4" width="10" height="12.2" fill="url(#ic5)"/><path d="M2 3.2 H8.6 M2 7.6 H8.6 M2 9.2 H8.6" stroke="#5f7fa8" stroke-width="1"/><path d="M2 4.2 H8.6" stroke="#7aa6d8" stroke-width=".8"/></svg><div class="c ty" style="left:246.7px;width:57px;top:1px">Class</div><div class="c" style="left:859px;width:56px;text-align:center;top:1.7px">1</div></div>
<div style="left:51px;top:399.67px;width:956px;height:14.6px;color:#fff"><div class="rnt" style="top:0.3px">6</div><div class="c" style="left:30.5px;width:94.3px;top:1.7px">Risk Scoring Model</div><div class="c" style="left:127px;width:103.4px;top:1.7px">Risk Scoring Model</div><svg style="left:233.0px;top:1px" width="11" height="13" viewBox="0 0 11 13"><defs><linearGradient id="ic6" x1="0" y1="0" x2="1" y2="0"><stop offset="0" stop-color="#4384d2"/><stop offset="1" stop-color="#6ea4e0"/></linearGradient></defs><rect x=".4" y=".4" width="10" height="12.2" fill="url(#ic6)"/><path d="M2 3.2 H8.6 M2 7.6 H8.6 M2 9.2 H8.6" stroke="#5f7fa8" stroke-width="1"/><path d="M2 4.2 H8.6" stroke="#7aa6d8" stroke-width=".8"/></svg><div class="c ty" style="left:246.7px;width:57px;top:1px">Class</div><div class="c" style="left:859px;width:56px;text-align:center;top:1.7px">1</div></div>
<div style="left:51px;top:415.05px;width:956px;height:14.6px;color:#fff"><div class="rnt" style="top:0.3px">7</div><div class="c" style="left:30.5px;width:94.3px;top:1.7px">Fraud Pattern Database</div><div class="c" style="left:127px;width:103.4px;top:1.7px">Fraud Pattern Database</div><svg style="left:231.5px;top:1px" width="15" height="13" viewBox="0 0 15 13"><defs><linearGradient id="ic7" x1="0" y1="0" x2="1" y2="0"><stop offset="0" stop-color="#7fb0e6"/><stop offset="1" stop-color="#3f7cc8"/></linearGradient></defs><rect x=".2" y=".6" width="4.2" height="2.6" fill="#5c96da"/><rect x=".2" y="3" width="14" height="9.8" fill="url(#ic7)"/><path d="M3.2 5.6 H11.2" stroke="#3a4f78" stroke-width=".9"/></svg><div class="c ty" style="left:246.7px;width:57px;top:1px">Package</div><div class="c" style="left:859px;width:56px;text-align:center;top:1.7px">1</div></div>
<div style="left:51px;top:430.43px;width:956px;height:14.6px;color:#111"><div class="rnt" style="top:0.3px">8</div><div class="c" style="left:30.5px;width:94.3px;top:1.7px">Machine Learning Model Integration</div><div class="c" style="left:127px;width:103.4px;top:1.7px">Machine Learning Model Integration</div><svg style="left:231.5px;top:1.5px" width="15" height="12" viewBox="0 0 15 12"><defs><linearGradient id="ic8" x1="0" y1="0" x2="1" y2="0"><stop offset="0" stop-color="#7fb0e6"/><stop offset="1" stop-color="#4a86cf"/></linearGradient></defs><rect x=".2" y=".4" width="14" height="11" rx="3" fill="url(#ic8)"/><path d="M2.4 2.8 H7" stroke="#222" stroke-width="1"/></svg><div class="c ty" style="left:246.7px;width:57px;top:1px">Activity</div><div class="c" style="left:859px;width:56px;text-align:center;top:1.7px">1</div></div>
<div style="left:51px;top:445.81px;width:956px;height:14.6px;color:#111"><div class="rnt" style="top:0.3px">9</div><div class="c" style="left:30.5px;width:94.3px;top:1.7px">Alert Notification Service</div><div class="c" style="left:127px;width:103.4px;top:1.7px">Alert Notification Service</div><svg style="left:232.0px;top:1px" width="14" height="13" viewBox="0 0 14 13"><defs><linearGradient id="ic9" x1="0" y1="0" x2="1" y2="1"><stop offset="0" stop-color="#47c152"/><stop offset="1" stop-color="#0c8a2a"/></linearGradient></defs><rect x=".2" y=".4" width="13" height="12.2" rx="1" fill="url(#ic9)"/><text x="6.7" y="10.4" font-family="Liberation Sans,sans-serif" font-size="11" font-weight="bold" fill="#fff" text-anchor="middle">?</text></svg><div class="c ty" style="left:246.7px;width:57px;top:1px">Unspecified</div><div class="c" style="left:859px;width:56px;text-align:center;top:1.7px">1</div></div>
<div style="left:51px;top:461.19px;width:956px;height:14.6px;color:#111"><div class="rnt" style="top:0.3px">10</div><div class="c" style="left:30.5px;width:94.3px;top:1.7px">User Behavior Profiling</div><div class="c" style="left:127px;width:103.4px;top:1.7px">User Behavior Profiling</div><svg style="left:232.0px;top:3.5px" width="14" height="9" viewBox="0 0 14 9"><defs><linearGradient id="ic10" x1="0" y1="0" x2="1" y2="0"><stop offset="0" stop-color="#3f7cc8"/><stop offset="1" stop-color="#5c96da"/></linearGradient></defs><ellipse cx="6.6" cy="4.4" rx="6.5" ry="3.8" fill="url(#ic10)"/></svg><div class="c ty" style="left:246.7px;width:57px;top:1px">Use Case</div><div class="c" style="left:859px;width:56px;text-align:center;top:1.7px">1</div></div>
<div style="left:51px;top:476.57px;width:956px;height:14.6px;color:#111"><div class="rnt" style="top:0.3px">11</div><div class="c" style="left:30.5px;width:94.3px;top:1.7px">Transaction Validation Workflow</div><div class="c" style="left:127px;width:103.4px;top:1.7px">Transaction Validation Workflow</div><svg style="left:231.5px;top:1.5px" width="15" height="12" viewBox="0 0 15 12"><defs><linearGradient id="ic11" x1="0" y1="0" x2="1" y2="0"><stop offset="0" stop-color="#7fb0e6"/><stop offset="1" stop-color="#4a86cf"/></linearGradient></defs><rect x=".2" y=".4" width="14" height="11" rx="3" fill="url(#ic11)"/><path d="M2.4 2.8 H7" stroke="#222" stroke-width="1"/></svg><div class="c ty" style="left:246.7px;width:57px;top:1px">Activity</div><div class="c" style="left:859px;width:56px;text-align:center;top:1.7px">1</div></div>
<div style="left:51px;top:491.95px;width:956px;height:14.6px;color:#fff"><div class="rnt" style="top:0.3px">12</div><div class="c" style="left:30.5px;width:94.3px;top:1.7px">Compliance Reporting Module</div><div class="c" style="left:127px;width:103.4px;top:1.7px">Compliance Reporting Module</div><svg style="left:231.5px;top:1px" width="15" height="13" viewBox="0 0 15 13"><defs><linearGradient id="ic12" x1="0" y1="0" x2="1" y2="0"><stop offset="0" stop-color="#7fb0e6"/><stop offset="1" stop-color="#3f7cc8"/></linearGradient></defs><rect x=".2" y=".6" width="4.2" height="2.6" fill="#5c96da"/><rect x=".2" y="3" width="14" height="9.8" fill="url(#ic12)"/><path d="M3.2 5.6 H11.2" stroke="#3a4f78" stroke-width=".9"/></svg><div class="c ty" style="left:246.7px;width:57px;top:1px">Package</div><div class="c" style="left:859px;width:56px;text-align:center;top:1.7px">1</div></div>
<div style="left:51px;top:507.33px;width:956px;height:14.6px;color:#111"><div class="rnt" style="top:0.3px">13</div><div class="c" style="left:30.5px;width:94.3px;top:1.7px">System Integration Interface</div><div class="c" style="left:127px;width:103.4px;top:1.7px">System Integration Interface</div><svg style="left:232.0px;top:1px" width="14" height="13" viewBox="0 0 14 13"><defs><linearGradient id="ic13" x1="0" y1="0" x2="1" y2="1"><stop offset="0" stop-color="#47c152"/><stop offset="1" stop-color="#0c8a2a"/></linearGradient></defs><rect x=".2" y=".4" width="13" height="12.2" rx="1" fill="url(#ic13)"/><text x="6.7" y="10.4" font-family="Liberation Sans,sans-serif" font-size="11" font-weight="bold" fill="#fff" text-anchor="middle">?</text></svg><div class="c ty" style="left:246.7px;width:57px;top:1px">Unspecified</div><div class="c" style="left:859px;width:56px;text-align:center;top:1.7px">1</div></div>
<div style="left:51px;top:522.71px;width:956px;height:14.6px;color:#fff"><div class="rnt" style="top:0.3px">14</div><div class="c" style="left:30.5px;width:94.3px;top:1.7px">Historical Fraud Data Repository</div><div class="c" style="left:127px;width:103.4px;top:1.7px">Historical Fraud Data Repository</div><svg style="left:233.0px;top:1px" width="11" height="13" viewBox="0 0 11 13"><defs><linearGradient id="ic14" x1="0" y1="0" x2="1" y2="0"><stop offset="0" stop-color="#4384d2"/><stop offset="1" stop-color="#6ea4e0"/></linearGradient></defs><rect x=".4" y=".4" width="10" height="12.2" fill="url(#ic14)"/><path d="M2 3.2 H8.6 M2 7.6 H8.6 M2 9.2 H8.6" stroke="#5f7fa8" stroke-width="1"/><path d="M2 4.2 H8.6" stroke="#7aa6d8" stroke-width=".8"/></svg><div class="c ty" style="left:246.7px;width:57px;top:1px">Class</div><div class="c" style="left:859px;width:56px;text-align:center;top:1.7px">1</div></div>
<div style="left:51px;top:538.09px;width:956px;height:14.6px;color:#fff"><div class="rnt" style="top:0.3px">15</div><div class="c" style="left:30.5px;width:94.3px;top:1.7px">Real-Time Data Stream Processor</div><div class="c" style="left:127px;width:103.4px;top:1.7px">Real-Time Data Stream Processor</div><svg style="left:233.0px;top:1px" width="11" height="13" viewBox="0 0 11 13"><defs><linearGradient id="ic15" x1="0" y1="0" x2="1" y2="0"><stop offset="0" stop-color="#4384d2"/><stop offset="1" stop-color="#6ea4e0"/></linearGradient></defs><rect x=".4" y=".4" width="10" height="12.2" fill="url(#ic15)"/><path d="M2 3.2 H8.6 M2 7.6 H8.6 M2 9.2 H8.6" stroke="#5f7fa8" stroke-width="1"/><path d="M2 4.2 H8.6" stroke="#7aa6d8" stroke-width=".8"/></svg><div class="c ty" style="left:246.7px;width:57px;top:1px">Class</div><div class="c" style="left:859px;width:56px;text-align:center;top:1.7px">1</div></div>
</div></div>
<div style="left:1006.5px;top:357px;width:1px;height:197px;background:#d9d9d9"></div>
<div style="left:51px;top:553px;width:971px;height:1px;background:#9c9c9c"></div>
<div style="left:1013.4px;top:421px;width:1.8px;height:118.5px;background:#777;border-radius:1px"></div>
<div style="left:383px;top:403px;width:160px;height:79px;background:#fff;border:1px solid #c9c9c9;box-shadow:1px 1px 2px rgba(0,0,0,.18)"></div>
<div style="left:384px;top:404px;width:20px;height:77px;background:linear-gradient(90deg,#fff,#ededed)"></div>
<div style="left:384px;top:439px;width:158px;height:1.5px;background:#cfcfcf"></div>
<div style="left:384px;top:460.5px;width:158px;height:1px;background:#dcdcdc"></div>
<div style="left:386px;top:440.2px;width:154px;height:19.2px;border:1px solid #cfc3ab;border-radius:.5px;background:linear-gradient(#fff3d2,#fee2ae 50%,#fdd08c)"></div>
<div class="mi" style="left:410.8px;top:407.4px;letter-spacing:-0.2px">Set Type</div>
<div class="mi" style="left:410.8px;top:424.2px;letter-spacing:0px">Set Highlight</div>
<div class="mi" style="left:410.8px;top:444.8px;letter-spacing:-0.19px">Create Model Element</div>
<div class="mi" style="left:410.8px;top:465.8px;letter-spacing:-0.22px">Remove</div>
<svg style="left:528px;top:409.1px" width="6" height="8" viewBox="0 0 6 8"><path d="M1 .8 L4.6 4 L1 7.2" fill="none" stroke="#555" stroke-width="1"/></svg>
<svg style="left:528px;top:426px" width="6" height="8" viewBox="0 0 6 8"><path d="M1 .8 L4.6 4 L1 7.2" fill="none" stroke="#555" stroke-width="1"/></svg>
<svg style="left:388px;top:464px" width="14" height="14" viewBox="0 0 14 14">
<path d="M2.4 3.6 H11.2 L10.2 13.2 H3.4Z" fill="#8a8a8a"/>
<path d="M4.6 4.6 L5 12.2 M6.8 4.6 V12.2 M9 4.6 L8.6 12.2" stroke="#c9c9c9" stroke-width=".9"/>
<rect x="1.6" y="2.2" width="10.4" height="1.8" rx=".6" fill="#6f6f6f"/>
<rect x="5" y=".8" width="3.6" height="1.6" rx=".5" fill="#7a7a7a"/>
</svg>
<svg style="left:520px;top:448px" width="13" height="18" viewBox="0 0 13 18">
<path d="M1.3 1.2 V14.6 L4.4 11.7 L6.7 16.8 L8.8 15.8 L6.6 10.9 H10.8Z" fill="#fff" stroke="#222" stroke-width="1" stroke-linejoin="round"/></svg>
<div style="left:1px;top:555px;width:1022px;height:21px;background:linear-gradient(#fbfbfb,#ededed)"></div>
<svg style="left:965px;top:560px" width="18" height="12" viewBox="0 0 18 12">
<rect x="1.5" y="1.5" width="14.5" height="9.4" rx=".8" fill="#ececec" stroke="#a6c6e8" stroke-width="1"/>
<path d="M2 2 L8.8 6.8 L15.6 2" fill="none" stroke="#a6c6e8" stroke-width="1"/></svg>
<svg style="left:994px;top:557px" width="15" height="16" viewBox="0 0 15 16">
<path d="M1.5 1.5 H8.6 L12.4 5 V14.6 H1.5Z" fill="#f2f2f2" stroke="#9fc0e6" stroke-width="1"/>
<path d="M3.4 7 H10.4 M3.4 9 H10.4 M3.4 11 H10.4" stroke="#d0d0d0" stroke-width=".9"/>
<path d="M11.4 3.4 L5.6 12.2" stroke="#2a9ab0" stroke-width="1.15"/><path d="M5.6 12.2 l-.5 1.2" stroke="#d6a84a" stroke-width="1.2"/><path d="M11.4 3.4 l.6 -1" stroke="#e89a9a" stroke-width="1.4"/>
</svg>
</div></div></body></html>
